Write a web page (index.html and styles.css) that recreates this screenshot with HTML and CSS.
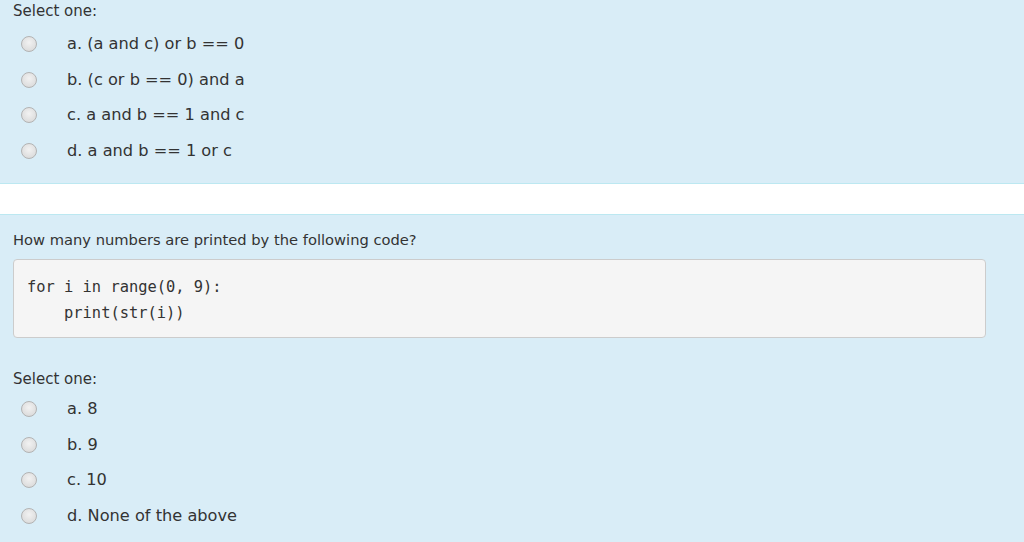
FILE: index.html
```html
<!DOCTYPE html>
<html>
<head>
<meta charset="utf-8">
<link rel="stylesheet" href="styles.css">
</head>
<body>
<div class="panel panel-top">
  <div class="prompt">Select one:</div>
  <div class="answers">
    <label class="opt"><span class="radio"></span><span class="txt">a. (a and c) or b == 0</span></label>
    <label class="opt"><span class="radio"></span><span class="txt">b. (c or b == 0) and a</span></label>
    <label class="opt"><span class="radio"></span><span class="txt">c. a and b == 1 and c</span></label>
    <label class="opt"><span class="radio"></span><span class="txt">d. a and b == 1 or c</span></label>
  </div>
</div>
<div class="gap"></div>
<div class="panel panel-bottom">
  <div class="question">How many numbers are printed by the following code?</div>
  <pre class="code">for i in range(0, 9):
    print(str(i))</pre>
  <div class="prompt prompt2">Select one:</div>
  <div class="answers answers2">
    <label class="opt"><span class="radio"></span><span class="txt">a. 8</span></label>
    <label class="opt"><span class="radio"></span><span class="txt">b. 9</span></label>
    <label class="opt"><span class="radio"></span><span class="txt">c. 10</span></label>
    <label class="opt"><span class="radio"></span><span class="txt">d. None of the above</span></label>
  </div>
</div>
</body>
</html>
```
FILE: styles.css
```css
html, body {
  margin: 0;
  padding: 0;
  background: #ffffff;
}
body {
  font-family: "DejaVu Sans", "Open Sans", sans-serif;
  font-size: 14px;
  color: #333333;
  width: 1024px;
  height: 542px;
  overflow: hidden;
}
.panel {
  background: #d9edf7;
  padding: 0 13px;
}
.panel-top {
  height: 182px;
  padding-top: 1px;
  border-bottom: 1px solid #bce8f1;
}
.gap {
  height: 30px;
}
.panel-bottom {
  border-top: 1px solid #bce8f1;
  height: 312px;
  padding-top: 15px;
  overflow: hidden;
}
.prompt {
  font-size: 15px;
  line-height: 20px;
}
.answers {
  display: flex;
  flex-direction: column;
  padding-top: 5px;
}
.answers2 {
  padding-top: 2px;
}
.opt {
  display: flex;
  align-items: center;
  height: 35.7px;
}
.radio {
  width: 14px;
  height: 14px;
  border-radius: 50%;
  border: 1px solid #b3b3b3;
  background: radial-gradient(circle at 50% 40%, #f2f2f2 0%, #dedede 70%, #d2d2d2 100%);
  margin-left: 8px;
  margin-right: 30px;
  flex: none;
}
.txt {
  font-size: 16.2px;
  line-height: 20px;
}
.question {
  font-size: 14.7px;
  line-height: 20px;
}
.code {
  margin: 9px 0 0 0;
  width: 973px;
  box-sizing: border-box;
  height: 79px;
  background: #f5f5f5;
  border: 1px solid #cccccc;
  border-radius: 4px;
  padding: 14px 13px 0;
  font-family: "DejaVu Sans Mono", "Liberation Mono", monospace;
  font-size: 15.4px;
  line-height: 26px;
  color: #333333;
}
.prompt2 {
  margin-top: 31px;
}
```
